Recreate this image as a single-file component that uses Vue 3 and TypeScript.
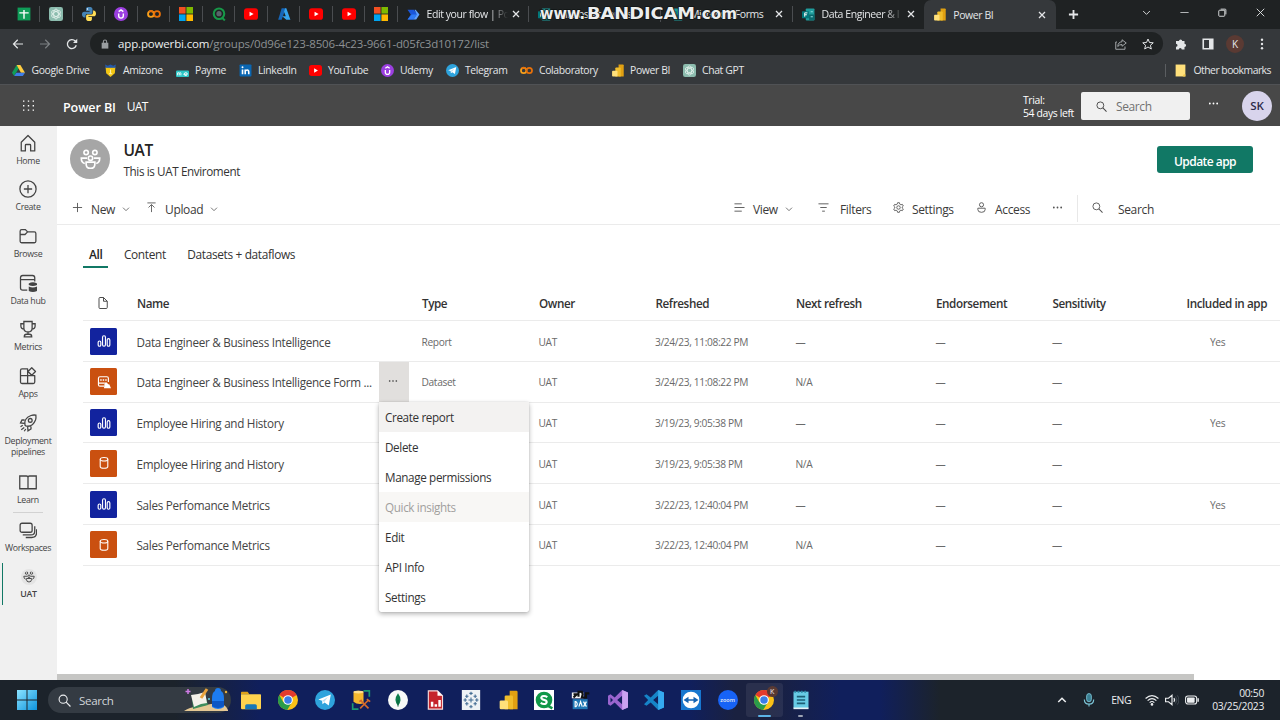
<script setup lang="ts">
import { ref } from 'vue'

interface Tab {
  icon: string
  title: string
  fade?: boolean
  active?: boolean
}

interface Item {
  name: string
  icon: string
  kind: string
  type: string
  refreshed: string
  next: string
  included: string
}

// Inner markup of every glyph, all drawn on a 24x24 box
const icons: Record<string, string> = {
  sheet: '<path fill="#0f9d58" d="M1 1h22v22H1z"/><path stroke="#fff" stroke-width="2.4" fill="none" d="M12 5v15M4 10h16"/>',
  gpt: '<rect width="24" height="24" rx="4" fill="#8cbcae"/><g fill="none" stroke="#e8f4f0" stroke-width="1.4"><ellipse cx="12" cy="12" rx="4" ry="8.5"/><ellipse cx="12" cy="12" rx="4" ry="8.5" transform="rotate(60 12 12)"/><ellipse cx="12" cy="12" rx="4" ry="8.5" transform="rotate(120 12 12)"/></g>',
  python: '<path fill="#4584b6" d="M12 0C7 0 7 2 7 4v3h6v1H4C1 8 0 10 0 13s2 5 4 5h2v-3c0-2 1-3 3-3h6c2 0 3-1 3-3V4c0-3-2-4-6-4z"/><path fill="#ffde57" d="M12 24c5 0 5-2 5-4v-3h-6v-1h9c3 0 4-2 4-5s-2-5-4-5h-1v3c0 2-1 4-3 4h-6c-2 0-3 1-3 3v4c0 3 2 4 5 4z"/><circle cx="9.500" cy="3.500" r="1.200" fill="#fff"/>',
  udemy: '<circle cx="12" cy="12" r="12" fill="#9b3fe0"/><path d="M8 11v4q0 4 4 4t4-4v-4M8 8l4-3 4 3" fill="none" stroke="#fff" stroke-width="2.400"/>',
  colab: '<g fill="none" stroke-width="3.200"><circle cx="6.800" cy="12" r="5" stroke="#f9a11b"/><circle cx="17.200" cy="12" r="5" stroke="#e8710a"/><path d="M3.300 8.500a5 5 0 0 1 7 0" stroke="#e8710a"/></g>',
  ms: '<path fill="#f25022" d="M0 0h11.300v11.300H0z"/><path fill="#7fba00" d="M12.700 0H24v11.300H12.700z"/><path fill="#00a4ef" d="M0 12.700h11.300V24H0z"/><path fill="#ffb900" d="M12.700 12.700H24V24H12.700z"/>',
  qlik: '<circle cx="12" cy="11.500" r="9" fill="none" stroke="#179848" stroke-width="3.600"/><circle cx="12" cy="11.500" r="4.500" fill="#58646a"/><path d="m17 18 5 5" stroke="#179848" stroke-width="3.500"/>',
  youtube: '<rect y="2" width="24" height="20" rx="5" fill="#f00"/><path fill="#fff" d="m9.500 8 7 4-7 4z"/>',
  azure: '<path fill="#1666b8" d="M8 2h7L8 22H2z"/><path fill="#35a4ee" d="M14 2h2l7 20h-7L9 16h6l-3-8z"/>',
  flow: '<path fill="#1a56db" d="M1 3h12l6 9-6 9H1l6-9z"/><path fill="#5ea0ff" d="M14 3h2l7 9-6 9h-5l6-9z"/><path fill="#2f7bf5" d="m1 21 8-9h9l-6 9z"/>',
  forms: '<rect x="7" y="1" width="16" height="22" rx="1.500" fill="#1f9c9c"/><path fill="#0b6a6e" d="M13 12h10v10H13z"/><rect y="6" width="13" height="13" rx="1" fill="#03787c"/><path d="M5 16V9h5M5 12.500h4" fill="none" stroke="#fff" stroke-width="1.800"/><path d="M16 7h4M16 16h4" stroke="#8ee0df" stroke-width="2"/>',
  powerbi: '<path fill="#e0a012" d="M14 1h8q1.500 0 1.500 1.500V23H14z"/><path fill="#f0bd2c" d="M8 8q0-1.500 1.500-1.500h7Q18 6.500 18 8v15H8z"/><path fill="#ffe07a" d="M2 14q0-1.500 1.500-1.500h7Q12 12.500 12 14v9H3.500Q2 23 2 21.500z"/>',
  drive: '<path fill="#109d58" d="M8.500 2 0 16l4 6 8.500-14z"/><path fill="#ffcd40" d="M8.500 2h7L24 16h-7.500z"/><path fill="#3f7de8" d="M8 16h16l-4 6H4z"/>',
  amizone: '<path fill="#f3c613" d="M3 6h18l-1 11-8 7-8-7z"/><path fill="#2458a8" d="m2 1 5 2 5-2 5 2 5-2-1 6H3z"/><path stroke="#fff0a8" stroke-width="2" fill="none" d="M12 10v8M9 18h6"/>',
  payme: '<rect y="12" width="24" height="12" rx="2" fill="#2cc6c6"/><path d="M3 21v-5M3 17q3-2 3 0v4M6 17q3-2 3 0v4M14 19h7q0-3-3-3t-3 3 5 2" stroke="#fff" fill="none" stroke-width="1.700"/>',
  linkedin: '<rect x="1" y="1" width="22" height="22" rx="1.500" fill="#0a66b2"/><path stroke="#fff" stroke-width="3" fill="none" d="M6.500 10v9M11.500 19v-9M11.500 13q1-2 3.500-2 3 0 3 4v4"/><circle cx="6.500" cy="6" r="1.800" fill="#fff"/>',
  telegram: '<circle cx="12" cy="12" r="12" fill="#2ea3dc"/><path fill="#fff" d="m4 11.500 15-6-2.500 13-5-3.500-2.500 2-.5-4z"/><path d="m8.500 13 7-4.500-4.500 6z" fill="#b8dff2"/>',
  folder: '<path fill="#ffe07b" d="M3 1h18v22H3z"/><path fill="#f2c84c" d="M18 19h3v4h-5z"/>',
  back: '<path d="M22 12H3M11.500 3.500 3 12l8.500 8.500" fill="none" stroke="currentColor" stroke-width="2.400"/>',
  forward: '<path d="M2 12h19M12.500 3.500 21 12l-8.500 8.500" fill="none" stroke="currentColor" stroke-width="2.400"/>',
  reload: '<path d="M20.500 14.500A9 9 0 1 1 18.500 6L21 9" fill="none" stroke="currentColor" stroke-width="2.600"/><path fill="currentColor" d="M22.500 1.500V10H14z"/>',
  lock: '<path fill="currentColor" d="M4 9h16v14H4z"/><path d="M8 10V6.500a4 4 0 0 1 8 0V10" fill="none" stroke="currentColor" stroke-width="2.500"/>',
  share: '<path d="M4 8H1.500v14.500H20V17" fill="none" stroke="currentColor" stroke-width="1.900"/><path d="M14 3.500 22.500 10 14 16.500V13q-6 0-8.500 4 .5-9 8.500-9.500z" fill="none" stroke="currentColor" stroke-width="1.900" stroke-linejoin="round"/>',
  star: '<path d="m12 2 3 7 7.500.600-5.700 5 1.800 7.400-6.600-4-6.600 4 1.800-7.400-5.700-5L9 9z" fill="none" stroke="currentColor" stroke-width="2"/>',
  puzzle: '<path fill="currentColor" d="M2 6h6a3.200 3.200 0 1 1 6.400 0H19v5.500a3.200 3.200 0 1 1 0 6.400V23h-5.500a3 3 0 0 0-6 0H2v-5.500a3 3 0 0 0 0-6z"/>',
  panel: '<path d="M2.500 2.500h19v19h-19z" fill="none" stroke="currentColor" stroke-width="3.200"/><path fill="currentColor" d="M14 3h8v18h-8z"/>',
  kebab: '<g fill="currentColor"><circle cx="12" cy="3.500" r="2.400"/><circle cx="12" cy="12" r="2.400"/><circle cx="12" cy="20.500" r="2.400"/></g>',
  dots: '<g fill="currentColor"><circle cx="4" cy="12" r="2"/><circle cx="12" cy="12" r="2"/><circle cx="20" cy="12" r="2"/></g>',
  close: '<path d="m3 3 18 18M21 3 3 21" stroke="currentColor" stroke-width="3.800"/>',
  closeThin: '<path d="m2 2 20 20M22 2 2 22" stroke="currentColor" stroke-width="2.400"/>',
  plusBold: '<path d="M12 2v20M2 12h20" stroke="currentColor" stroke-width="4"/>',
  plus: '<path d="M12 2v20M2 12h20" stroke="currentColor" stroke-width="2"/>',
  chevron: '<path d="m3 8 9 9 9-9" fill="none" stroke="currentColor" stroke-width="2.400"/>',
  chevronUp: '<path d="m3 17 9-9 9 9" fill="none" stroke="currentColor" stroke-width="3.600"/>',
  minus: '<path d="M1 12h22" stroke="currentColor" stroke-width="2"/>',
  restore: '<rect x="2" y="6" width="16" height="16" rx="2" fill="none" stroke="currentColor" stroke-width="2.400"/><path d="M7 3h12q2 0 2 2v12" fill="none" stroke="currentColor" stroke-width="2.400"/>',
  waffle: '<path stroke="currentColor" stroke-width="3" stroke-dasharray="3 7.500" d="M0 2.500h24M0 12.500h24M0 22h24"/>',
  search: '<circle cx="9.500" cy="9.500" r="7.500" fill="none" stroke="currentColor" stroke-width="2"/><path d="m15 15 8 8" stroke="currentColor" stroke-width="2.200"/>',
  home: '<path d="M3 11 12 2l9 9v11.500h-5.500V15q0-1-1-1h-5q-1 0-1 1v7.500H3z" fill="none" stroke="currentColor" stroke-width="1.700" stroke-linejoin="round"/>',
  create: '<circle cx="12" cy="12" r="10.800" fill="none" stroke="currentColor" stroke-width="1.700"/><path d="M12 6.500v11M6.500 12h11" stroke="currentColor" stroke-width="1.700"/>',
  browse: '<path d="M1.500 5.500q0-2 2-2h5l3 3h9q2 0 2 2V19q0 2-2 2h-17q-2 0-2-2zM1.500 10H8l3.500-3.500" fill="none" stroke="currentColor" stroke-width="1.700"/>',
  datahub: '<path d="M11 21.500H5Q2 21.500 2 18.500V5q0-3 3-3h13q3 0 3 3v5M2 7.500h19" fill="none" stroke="currentColor" stroke-width="1.700"/><path fill="currentColor" d="M13 12.500q5.500-3 11 0v2q-5.500 3-11 0zM13 16.500q5.500 3 11 0v6q-5.500 3-11 0z"/>',
  metrics: '<path d="M6.500 2h11v9q0 5-5.500 5t-5.500-5zM6.500 5H2.500v3q0 4 4.500 4M17.500 5h4v3q0 4-4.500 4M12 16v3M7 22.500q0-3.500 3-3.500h4q3 0 3 3.500z" fill="none" stroke="currentColor" stroke-width="1.700"/>',
  apps: '<path d="M2 11.500v-7q0-2 2-2h7.500v9zM2 11.500h9.500v10.500H4q-2 0-2-2zM11.500 11.500H21q0 0 0 2V20q0 2-2 2h-7.500zM17 1l5 5-5 5-5-5z" fill="none" stroke="currentColor" stroke-width="1.700" stroke-linejoin="round"/>',
  rocket: '<path d="M8 15q-2-9 8-13 3-1 6.500-.5.500 3.500-.5 6.500-4 10-13 8zM7.500 8H4l-2 4 5 .500M16 16.500V20l-4 2.500-.5-5.500M2 17l3-2M3 21l4-3M7 23l2-3" fill="none" stroke="currentColor" stroke-width="1.700"/><circle cx="15" cy="8.500" r="2.500" fill="none" stroke="currentColor" stroke-width="1.700"/>',
  learn: '<path d="M1 4h9q2 0 2 2v14q0 1-2 1H1zM23 4h-9q-2 0-2 2v14q0 1 2 1h9z" fill="none" stroke="currentColor" stroke-width="1.700"/>',
  workspaces: '<rect x="1.500" y="3" width="16" height="12" rx="2.500" fill="none" stroke="currentColor" stroke-width="1.700"/><path d="M5 18.500h11q5 0 5-5V7M9 22h8q6.500 0 6.500-7v-4" fill="none" stroke="currentColor" stroke-width="1.700"/>',
  people: '<g fill="none" stroke="currentColor" stroke-width="1.900"><circle cx="7" cy="4" r="2.500"/><circle cx="17" cy="4" r="2.500"/><circle cx="12" cy="10.500" r="2.500"/><path d="M7 15h10v2q0 5-5 5t-5-5zM8 10.500H1.500q0 5 4 6M16 10.500h6.500q0 5-4 6"/></g>',
  upload: '<path d="M3 2h18M12 22V6M5.500 12 12 5.500l6.500 6.500" fill="none" stroke="currentColor" stroke-width="1.900"/>',
  view: '<path d="M1 4h16M1 12h22M1 20h16" stroke="currentColor" stroke-width="2"/>',
  filters: '<path d="M1 4h22M5 12h14M9 20h6" stroke="currentColor" stroke-width="2"/>',
  settings: '<path d="m10 1.500-.8 3.200-2.400 1.400L3.500 5.200l-2 3.600L4 11v2l-2.500 2.200 2 3.600 3.300-.9 2.400 1.400.8 3.200h4l.8-3.200 2.400-1.400 3.300.9 2-3.600L20 13v-2l2.500-2.200-2-3.600-3.300.9-2.400-1.400L14 1.500z" fill="none" stroke="currentColor" stroke-width="1.900"/><circle cx="12" cy="12" r="3.800" fill="none" stroke="currentColor" stroke-width="1.900"/>',
  access: '<g fill="none" stroke="currentColor" stroke-width="2"><circle cx="12" cy="6" r="4.500"/><path d="M4 13.500h16v3q0 6-8 6t-8-6z"/></g>',
  file: '<path d="M4 3q0-2 2-2h7l7.500 7.500V21q0 2-2 2H6q-2 0-2-2zM13 1v7.500h7.500" fill="none" stroke="currentColor" stroke-width="1.900"/>',
  report: '<g fill="none" stroke="currentColor" stroke-width="2"><rect x="2" y="12" width="4.500" height="9" rx="2.200"/><rect x="9.500" y="3" width="5" height="18" rx="2.400"/><rect x="17.500" y="8" width="4.500" height="13" rx="2.200"/></g>',
  dataset: '<g fill="none" stroke="currentColor" stroke-width="1.900"><ellipse cx="12" cy="5.500" rx="6.500" ry="3"/><path d="M5.500 5.500v12.500q0 3 6.500 3t6.500-3v-12.500"/></g>',
  flowset: '<path d="M12 19H5q-2.500 0-2.500-2.500v-11Q2.500 3 5 3h12q2.500 0 2.500 2.500V12M2.500 14H13" fill="none" stroke="currentColor" stroke-width="2"/><path stroke="currentColor" stroke-width="2.500" stroke-dasharray="2.500 1.800" d="M5.500 8.500h12"/><path fill="currentColor" d="M13 13h4l2 3h2l3 6.500H12z"/>',
  windows: '<defs><linearGradient id="win" x2="1" y2="1"><stop stop-color="#8be3ff"/><stop offset="1" stop-color="#0d93dd"/></linearGradient></defs><path fill="url(#win)" d="M0 0h11.400v11.400H0zM12.600 0H24v11.400H12.600zM0 12.600h11.400V24H0zM12.600 12.600H24V24H12.600z"/>',
  explorer: '<path fill="#dda21a" d="M0 3q0-1 1-1h7l2 3H0z"/><path fill="#ffd34e" d="M0 5h23q1 0 1 1v16q0 1-1 1H1q-1 0-1-1z"/><path fill="#1878b8" d="M5 23v-4q0-2 2-2h10q2 0 2 2v4z"/>',
  chrome: '<circle cx="12" cy="12" r="12" fill="#fbc116"/><path fill="#e33b2e" d="M12 12 1.600 6A12 12 0 0 1 22.400 6z"/><path fill="#2a9c4a" d="M12 12v0L6.500 15 1.600 6A12 12 0 0 0 11 24l5.500-9z"/><circle cx="12" cy="12" r="5.800" fill="#fff"/><circle cx="12" cy="12" r="4.500" fill="#3a7de8"/>',
  tools: '<path d="M15 1h7v7M2 16v7h7" fill="none" stroke="#1c9a72" stroke-width="2"/><path fill="#f5b82e" d="M3 2q5-2 12 0v14q-7 2-12-2z"/><ellipse cx="9" cy="2.500" rx="6" ry="1.700" fill="#ffdf8a"/><path d="m11 22 10-10M12 13l9 9M10 14l3-2M19 11l4 3" stroke="#d46a2d" stroke-width="2"/>',
  mongo: '<circle cx="12" cy="12" r="12" fill="#f7faf8"/><path fill="#0b7d4b" d="M12 4q6 8 0 15-6-7 0-15z"/><path d="M12 12v8" stroke="#0a5a38" stroke-width="1"/>',
  reportdoc: '<path fill="#c5242b" stroke="#f5d9da" stroke-width="1.400" d="M4 1h11l6 6v16H4z"/><path fill="#fff" d="M7 14h3v6H7zM11.500 17h3v3h-3zM16 12h3v8h-3zM15 1v6h6z"/>',
  tableau: '<path fill="#eef2f5" d="M1 0h22v24H1z"/><path stroke="#426c93" stroke-width="1.300" d="M12 9v6M9 12h6M12 2v4M10 4h4M12 18v4M10 20h4M3 12h4M5 10v4M17 12h4M19 10v4M7 5.500v4M5 7.500h4M17 5.500v4M15 7.500h4M7 14.500v4M5 16.500h4M17 14.500v4M15 16.500h4"/>',
  qliksense: '<path fill="#fff" d="M0 0h24v24H0z"/><circle cx="12" cy="12" r="10" fill="#109848"/><path d="m17 19 5 3" stroke="#109848" stroke-width="3"/><path d="M16 8.500q-3-2-6-1-2.500 2 0 3.500l4 1.500q2.500 2 0 4-3 1-6-1" fill="none" stroke="#fff" stroke-width="2.600"/>',
  dax: '<path fill="#f4f4f4" d="M1 3h14v7H1z"/><path fill="#2178b5" d="M2 11h18v12H2z"/><path d="M9 8V2h4l1 3-1 4h5V4h4M3 5h4L3 9" stroke="#111" stroke-width="2.500" fill="none"/><path d="M5 14v6h1q3-3 0-6zM9.500 20l2-6 2 6M15 14l3.500 6M18.500 14 15 20" stroke="#fff" stroke-width="1.400" fill="none"/>',
  vs: '<path fill="#9a65cf" d="M17 0 8 9 3 5 0 7v10l3 2 5-4 9 9 7-3V3zM3 9l3 3-3 3zm14-2v10l-6-5z" fill-rule="evenodd"/><path fill="#c9a2f1" d="m17 0 7 3v18l-7 3z"/>',
  vscode: '<path fill="#1684c8" d="M17 0 8 9 3 5 0 7l5 5-5 5 3 2 5-4 9 9 7-3V3zm0 7v10l-6-5z" fill-rule="evenodd"/><path fill="#35aaf0" d="m17 0 7 3v18l-7 3z"/>',
  teamviewer: '<path fill="#1777cf" d="M0 0h24v24H0z"/><circle cx="12" cy="12" r="10" fill="#fff"/><path fill="#1463b2" d="m3 12 6-4v3h6V8l6 4-6 4v-3H9v3z"/>',
  zoomBg: '<circle cx="12" cy="12" r="12" fill="#1763f6"/>',
  notepad: '<path fill="#68cbe5" d="M3 2h18v20H3z"/><path fill="#e7f3f7" d="M3 21h18v2H3z"/><path stroke="#1d5f76" stroke-width="2" d="M7 8h10M7 12h10M7 16h10"/><path stroke="#2b87a2" stroke-width="2.500" stroke-dasharray="2 2" d="M4 2h16"/>',
  mic: '<rect x="8" y="1" width="8" height="14" rx="4" fill="#3a7f93" stroke="currentColor" stroke-width="1.500"/><path d="M4 11q0 8 8 8t8-8M12 19v4" fill="none" stroke="currentColor" stroke-width="2"/>',
  wifi: '<g fill="none" stroke="currentColor" stroke-width="2"><path d="M1 9.500q11-10 22 0M4.500 13q7.500-7 15 0M8 16.500q4-4 8 0"/></g><circle cx="12" cy="19.500" r="2.200" fill="currentColor"/>',
  volume: '<path d="M1 9h5l6-5v16l-6-5H1z" fill="none" stroke="currentColor" stroke-width="2"/><path d="M15 9q3 3 0 6" fill="none" stroke="currentColor" stroke-width="2"/><path d="M18 6q5 6 0 12M21 4q6 8 0 16" fill="none" stroke="#4a525a" stroke-width="1.500"/>',
  battery: '<rect x="1" y="5" width="19" height="14" rx="4" fill="none" stroke="currentColor" stroke-width="1.800"/><rect x="3.500" y="7.500" width="13" height="9" rx="1.500" fill="currentColor"/><path d="M22.500 9v6" stroke="currentColor" stroke-width="2.500"/>',
}

const pinned = ['sheet', 'gpt', 'python', 'udemy', 'colab', 'ms', 'qlik', 'youtube', 'azure', 'youtube', 'youtube', 'ms']

const tabs: Tab[] = [
  { icon: 'flow', title: 'Edit your flow | Po', fade: true },
  { icon: 'forms', title: 'Microsoft Forms' },
  { icon: 'forms', title: 'Microsoft Forms' },
  { icon: 'forms', title: 'Data Engineer & I', fade: true },
  { icon: 'powerbi', title: 'Power BI', active: true },
]

const bookmarks = [
  { icon: 'drive', name: 'Google Drive' },
  { icon: 'amizone', name: 'Amizone' },
  { icon: 'payme', name: 'Payme' },
  { icon: 'linkedin', name: 'LinkedIn' },
  { icon: 'youtube', name: 'YouTube' },
  { icon: 'udemy', name: 'Udemy' },
  { icon: 'telegram', name: 'Telegram' },
  { icon: 'colab', name: 'Colaboratory' },
  { icon: 'powerbi', name: 'Power BI' },
  { icon: 'gpt', name: 'Chat GPT' },
]

const nav = [
  { icon: 'home', name: 'Home' },
  { icon: 'create', name: 'Create' },
  { icon: 'browse', name: 'Browse' },
  { icon: 'datahub', name: 'Data hub' },
  { icon: 'metrics', name: 'Metrics' },
  { icon: 'apps', name: 'Apps' },
  { icon: 'rocket', name: 'Deployment pipelines', cls: 'tall' },
  { icon: 'learn', name: 'Learn', cls: 'last' },
  { icon: 'workspaces', name: 'Workspaces' },
]

const columns = ['Name', 'Type', 'Owner', 'Refreshed', 'Next refresh', 'Endorsement', 'Sensitivity', 'Included in app']

const items: Item[] = [
  { name: 'Data Engineer & Business Intelligence', icon: 'report', kind: 'blue', type: 'Report', refreshed: '3/24/23, 11:08:22 PM', next: '—', included: 'Yes' },
  { name: 'Data Engineer & Business Intelligence Form ...', icon: 'flowset', kind: 'orange', type: 'Dataset', refreshed: '3/24/23, 11:08:22 PM', next: 'N/A', included: '' },
  { name: 'Employee Hiring and History', icon: 'report', kind: 'blue', type: '', refreshed: '3/19/23, 9:05:38 PM', next: '—', included: 'Yes' },
  { name: 'Employee Hiring and History', icon: 'dataset', kind: 'orange', type: '', refreshed: '3/19/23, 9:05:38 PM', next: 'N/A', included: '' },
  { name: 'Sales Perfomance Metrics', icon: 'report', kind: 'blue', type: '', refreshed: '3/22/23, 12:40:04 PM', next: '—', included: 'Yes' },
  { name: 'Sales Perfomance Metrics', icon: 'dataset', kind: 'orange', type: '', refreshed: '3/22/23, 12:40:04 PM', next: 'N/A', included: '' },
]

const menu = ['Create report', 'Delete', 'Manage permissions', 'Quick insights', 'Edit', 'API Info', 'Settings']
const openRow = ref(1)
const hovered = ref('Create report')

const taskbar = ['explorer', 'chrome', 'telegram', 'tools', 'mongo', 'reportdoc', 'tableau', 'powerbi', 'qliksense', 'dax', 'vs', 'vscode', 'teamviewer', 'zoomBg', 'chrome', 'notepad']
</script>

<template>
  <div class="screen">
    <div class="tabstrip">
      <div v-for="(p, i) in pinned" :key="i" class="pin">
        <svg viewBox="0 0 24 24" v-html="icons[p]"></svg>
      </div>
      <div v-for="(t, i) in tabs" :key="'t' + i" class="tab" :class="{ active: t.active, before: i === 3 }">
        <svg class="fav" viewBox="0 0 24 24" v-html="icons[t.icon]"></svg>
        <span class="tab-title" :class="{ fade: t.fade }">{{ t.title }}</span>
        <svg v-if="i !== 1" class="x" viewBox="0 0 24 24" v-html="icons.close"></svg>
      </div>
      <svg class="newtab" viewBox="0 0 24 24" v-html="icons.plusBold"></svg>
      <div class="win">
        <svg viewBox="0 0 24 24" v-html="icons.chevron"></svg>
        <svg viewBox="0 0 24 24" v-html="icons.minus"></svg>
        <svg viewBox="0 0 24 24" v-html="icons.restore"></svg>
        <svg viewBox="0 0 24 24" v-html="icons.closeThin"></svg>
      </div>
      <svg class="watermark" viewBox="0 0 200 22">
        <text x="1" y="16.5" font-size="16" textLength="45" lengthAdjust="spacingAndGlyphs">www.</text>
        <text x="48" y="16.5" font-size="16" textLength="108" lengthAdjust="spacingAndGlyphs">BANDICAM</text>
        <text x="157" y="16.5" font-size="15" textLength="41" lengthAdjust="spacingAndGlyphs">.com</text>
      </svg>
    </div>

    <div class="address">
      <svg class="nav-ico" viewBox="0 0 24 24" v-html="icons.back"></svg>
      <svg class="nav-ico dim" viewBox="0 0 24 24" v-html="icons.forward"></svg>
      <svg class="nav-ico" viewBox="0 0 24 24" v-html="icons.reload"></svg>
      <div class="omnibox">
        <svg class="lock" viewBox="0 0 24 24" v-html="icons.lock"></svg>
        <span class="url">app.powerbi.com<i>/groups/0d96e123-8506-4c23-9661-d05fc3d10172/list</i></span>
        <svg class="share" viewBox="0 0 24 24" v-html="icons.share"></svg>
        <svg class="star" viewBox="0 0 24 24" v-html="icons.star"></svg>
      </div>
      <div class="ext">
        <svg viewBox="0 0 24 24" v-html="icons.puzzle"></svg>
        <svg viewBox="0 0 24 24" v-html="icons.panel"></svg>
        <span class="profile">K</span>
        <svg viewBox="0 0 24 24" v-html="icons.kebab"></svg>
      </div>
    </div>

    <div class="bookmarks">
      <div v-for="b in bookmarks" :key="b.name" class="bookmark">
        <svg viewBox="0 0 24 24" v-html="icons[b.icon]"></svg>
        <span>{{ b.name }}</span>
      </div>
      <div class="bookmark other">
        <svg viewBox="0 0 24 24" v-html="icons.folder"></svg>
        <span>Other bookmarks</span>
      </div>
    </div>

    <header class="header">
      <svg class="waffle" viewBox="0 0 24 24" v-html="icons.waffle"></svg>
      <b>Power BI</b>
      <span class="crumb">UAT</span>
      <div class="trial">Trial:<br>54 days left</div>
      <div class="header-search">
        <svg viewBox="0 0 24 24" v-html="icons.search"></svg>
        <span>Search</span>
      </div>
      <svg class="more" viewBox="0 0 24 24" v-html="icons.dots"></svg>
      <div class="avatar">SK</div>
    </header>

    <div class="body">
      <nav class="sidebar">
        <div v-for="n in nav" :key="n.name" class="nav-item" :class="n.cls">
          <svg viewBox="0 0 24 24" v-html="icons[n.icon]"></svg>
          <span>{{ n.name }}</span>
        </div>
        <div class="nav-item current">
          <svg viewBox="0 0 24 24" v-html="icons.people"></svg>
          <span>UAT</span>
        </div>
      </nav>

      <main class="main">
        <div class="title-row">
          <div class="ws-logo">
            <svg viewBox="0 0 24 24" v-html="icons.people"></svg>
          </div>
          <div class="ws-text">
            <h1>UAT</h1>
            <p>This is UAT Enviroment</p>
          </div>
          <button class="update">Update app</button>
        </div>

        <div class="toolbar">
          <div class="tool new">
            <svg viewBox="0 0 24 24" v-html="icons.plus"></svg>
            <span>New</span>
            <svg class="chev" viewBox="0 0 24 24" v-html="icons.chevron"></svg>
          </div>
          <div class="tool upload">
            <svg viewBox="0 0 24 24" v-html="icons.upload"></svg>
            <span>Upload</span>
            <svg class="chev" viewBox="0 0 24 24" v-html="icons.chevron"></svg>
          </div>
          <div class="tool view">
            <svg viewBox="0 0 24 24" v-html="icons.view"></svg>
            <span>View</span>
            <svg class="chev" viewBox="0 0 24 24" v-html="icons.chevron"></svg>
          </div>
          <div class="tool filters">
            <svg viewBox="0 0 24 24" v-html="icons.filters"></svg>
            <span>Filters</span>
          </div>
          <div class="tool settings">
            <svg viewBox="0 0 24 24" v-html="icons.settings"></svg>
            <span>Settings</span>
          </div>
          <div class="tool access">
            <svg viewBox="0 0 24 24" v-html="icons.access"></svg>
            <span>Access</span>
          </div>
          <div class="tool dots">
            <svg viewBox="0 0 24 24" v-html="icons.dots"></svg>
          </div>
          <div class="tool find">
            <svg viewBox="0 0 24 24" v-html="icons.search"></svg>
            <span>Search</span>
          </div>
        </div>

        <div class="pivot">
          <span class="selected">All</span>
          <span>Content</span>
          <span>Datasets + dataflows</span>
        </div>

        <div class="table">
          <div class="row head">
            <svg class="file" viewBox="0 0 24 24" v-html="icons.file"></svg>
            <span v-for="c in columns" :key="c">{{ c }}</span>
          </div>
          <div v-for="(it, i) in items" :key="i" class="row">
            <div class="kind" :class="it.kind">
              <svg viewBox="0 0 24 24" v-html="icons[it.icon]"></svg>
            </div>
            <div class="name">
              <span>{{ it.name }}</span>
              <div v-if="openRow === i" class="row-more">
                <svg viewBox="0 0 24 24" v-html="icons.dots"></svg>
                <div class="menu">
                  <div
                    v-for="m in menu"
                    :key="m"
                    class="menu-item"
                    :class="{ hover: hovered === m, disabled: m === 'Quick insights' }"
                  >{{ m }}</div>
                </div>
              </div>
            </div>
            <span>{{ it.type }}</span>
            <span>UAT</span>
            <span>{{ it.refreshed }}</span>
            <span>{{ it.next }}</span>
            <span>—</span>
            <span>—</span>
            <span class="included">{{ it.included }}</span>
          </div>
        </div>

        <div class="scrollbar"><div class="thumb"></div></div>
      </main>
    </div>

    <footer class="taskbar">
      <svg class="start" viewBox="0 0 24 24" v-html="icons.windows"></svg>
      <div class="task-search">
        <svg viewBox="0 0 24 24" v-html="icons.search"></svg>
        <span>Search</span>
        <svg class="art" viewBox="0 0 46 24">
          <path fill="#e5c894" d="M0 23q6-4 12-4l15-3q14-2 17 6v1z" />
          <path fill="#3e8d5c" d="m8 9 13-3 3 11-15 4z" />
          <path fill="#f4f1ea" d="m7 7 7-1 7-2 2 11-6 1-7 3z" />
          <path stroke="#e8a33c" stroke-width="3" d="m17 10 6-9" />
          <path fill="#1d7cf0" d="M28 11q0-7 3-8 0-3 3-3t3 3q3 1 3 8v8q-6 4-12 0z" />
          <path fill="#0c56c4" d="M28 13h12v5q-6 4-12 0z" />
          <path stroke="#d07be6" stroke-width="1.500" d="M4 1v5M1.500 3.500h5" />
          <circle cx="42" cy="4" r="1.200" fill="#e8b23c" />
          <circle cx="25" cy="11" r="1" fill="#5fd6e8" />
        </svg>
      </div>
      <div class="apps">
        <div v-for="(a, i) in taskbar" :key="i" class="app" :class="{ focused: i === 14, open: i === 15 }">
          <svg viewBox="0 0 24 24" v-html="icons[a]"></svg>
          <em v-if="a === 'zoomBg'" class="zoom">zoom</em>
          <em v-if="i === 14" class="badge">K</em>
        </div>
      </div>
      <div class="tray">
        <svg class="up" viewBox="0 0 24 24" v-html="icons.chevronUp"></svg>
        <svg class="mic" viewBox="0 0 24 24" v-html="icons.mic"></svg>
        <span class="lang">ENG</span>
        <svg class="wifi" viewBox="0 0 24 24" v-html="icons.wifi"></svg>
        <svg class="vol" viewBox="0 0 24 24" v-html="icons.volume"></svg>
        <svg class="bat" viewBox="0 0 24 24" v-html="icons.battery"></svg>
        <div class="clock">00:50<br>03/25/2023</div>
      </div>
    </footer>
  </div>
</template>

<style>
body {
  margin: 0;
  overflow: hidden;
}
</style>

<style scoped>
.screen {
  width: 1280px;
  height: 720px;
  display: flex;
  flex-direction: column;
  overflow: hidden;
  font-family: 'Open Sans', 'Noto Sans', sans-serif;
  font-size: 12px;
  color: #333;
  background: #fff;
}

svg {
  display: block;
  flex: none;
}

span {
  white-space: nowrap;
}

/* browser chrome */
.tabstrip {
  position: relative;
  height: 29px;
  display: flex;
  padding-left: 7.5px;
  background: #1f2223;
  color: #e4e6e8;
  font-size: 10.5px;
}

.pin {
  width: 32.5px;
  height: 28px;
  box-sizing: border-box;
  display: flex;
  align-items: center;
  padding-left: 9px;
  background: linear-gradient(#4a4d50, #4a4d50) right center / 1px 16px no-repeat;
}

.pin svg {
  width: 14px;
  height: 14px;
}

.tab {
  width: 131.7px;
  height: 28px;
  box-sizing: border-box;
  display: flex;
  align-items: center;
  padding-left: 9px;
  background: linear-gradient(#4a4d50, #4a4d50) right center / 1px 16px no-repeat;
}

.tab.before {
  background: none;
}

.tab.active {
  height: 29px;
  background: #35383b;
  border-radius: 7px 7px 0 0;
}

.fav {
  width: 13px;
  height: 13px;
}

.tab-title {
  width: 81px;
  margin-left: 7px;
  letter-spacing: -0.42px;
}

.fade {
  -webkit-mask-image: linear-gradient(90deg, #000 78%, transparent);
  mask-image: linear-gradient(90deg, #000 78%, transparent);
}

.x {
  width: 8px;
  height: 8px;
  margin-left: 4px;
}

.newtab {
  width: 11px;
  height: 11px;
  margin: 9px 0 0 12px;
}

.win {
  margin-left: auto;
  display: flex;
  align-items: center;
  gap: 29px;
  height: 25px;
  padding-right: 15px;
}

.win svg {
  width: 9px;
  height: 9px;
}

.watermark {
  position: absolute;
  left: 539px;
  top: 2px;
  width: 200px;
  height: 22px;
}

.watermark text {
  font-family: 'DejaVu Sans', sans-serif;
  font-weight: bold;
  fill: #eceeee;
  stroke: #101414;
  stroke-width: 1.6px;
  paint-order: stroke;
}

.address {
  height: 29px;
  display: flex;
  align-items: center;
  background: #35383b;
  color: #e4e6e8;
  padding-left: 12px;
}

.nav-ico {
  width: 12px;
  height: 12px;
  margin-right: 15px;
}

.dim {
  color: #7c8083;
}

.omnibox {
  flex: none;
  width: 1073px;
  height: 23px;
  box-sizing: border-box;
  margin-left: -3px;
  border-radius: 12px;
  background: #1f2223;
  display: flex;
  align-items: center;
}

.lock {
  width: 10px;
  height: 10px;
  margin-left: 10px;
  color: #9a9ea1;
}

.url {
  margin-left: 8px;
  flex: 1;
  font-size: 11.5px;
  color: #eceeef;
  letter-spacing: -0.15px;
}

.url i {
  font-style: normal;
  color: #8d9193;
}

.share {
  width: 12px;
  height: 12px;
  color: #a8acae;
}

.star {
  width: 12px;
  height: 12px;
  margin: 0 9px 0 15px;
}

.ext {
  display: flex;
  align-items: center;
  margin-left: 12px;
}

.ext svg {
  width: 12px;
  height: 12px;
  margin-right: 15px;
}

.profile {
  width: 18px;
  height: 18px;
  line-height: 18px;
  margin: 0 12px 0 -3px;
  border-radius: 50%;
  background: #5a3a33;
  text-align: center;
  font-size: 10px;
}

.ext svg:last-child {
  margin-right: 0;
}

.bookmarks {
  height: 27px;
  box-sizing: border-box;
  padding: 0 9px 2px 12px;
  border-bottom: 1px solid #505255;
  display: grid;
  grid-template-columns: 91.5px 72px 63px 70px 72px 65px 74px 91px 72px 60px 1fr;
  align-items: center;
  background: #35383b;
  color: #e4e6e8;
  font-size: 10.4px;
  letter-spacing: -0.36px;
}

.bookmark {
  display: flex;
  align-items: center;
}

.bookmark svg {
  width: 13px;
  height: 13px;
  margin-right: 6.5px;
}

.other {
  justify-self: end;
  height: 13px;
  border-left: 1px solid #5b5e61;
  padding-left: 8px;
  letter-spacing: -0.52px;
}

.header {
  height: 41px;
  display: flex;
  align-items: center;
  background: #484848;
  color: #fff;
}

.waffle {
  width: 11px;
  height: 11px;
  margin: 0 29px 0 23px;
}

.header b {
  font-size: 12.6px;
  font-weight: 600;
  letter-spacing: -0.12px;
  margin-top: 3px;
}

.crumb {
  margin: 1px 0 0 11px;
  font-size: 12px;
  letter-spacing: -0.7px;
}

.trial {
  margin-left: auto;
  font-size: 10.4px;
  line-height: 13px;
  letter-spacing: -0.36px;
  margin-right: 7px;
  margin-top: 2px;
  width: 51px;
  white-space: nowrap;
}

.header-search {
  width: 109px;
  height: 28px;
  box-sizing: border-box;
  padding: 2px 0 0 15px;
  display: flex;
  align-items: center;
  background: #f0f0f0;
  color: #707070;
  border-radius: 2px;
  letter-spacing: -0.4px;
}

.header-search svg {
  width: 11px;
  height: 11px;
  margin-right: 9px;
  color: #444;
}

.more {
  width: 11px;
  height: 11px;
  margin: -4px 23px 0 18px;
}

.avatar {
  width: 30px;
  height: 30px;
  line-height: 30px;
  margin-right: 8px;
  border-radius: 50%;
  background: #d8d4ec;
  color: #2d2a4a;
  font-size: 11.5px;
  font-weight: 600;
  text-align: center;
}

.body {
  flex: 1;
  display: flex;
  min-height: 0;
}

.sidebar {
  width: 57px;
  box-sizing: border-box;
  padding-right: 1px;
  background: #f0f0f0;
}

.nav-item {
  height: 46.7px;
  box-sizing: border-box;
  padding-top: 7.5px;
  display: flex;
  flex-direction: column;
  align-items: center;
  color: #444;
  font-size: 8.8px;
  letter-spacing: -0.32px;
  line-height: 11px;
  text-align: center;
}

.nav-item svg {
  width: 18px;
  height: 18px;
  margin-bottom: 3.5px;
}

.nav-item.tall {
  height: 59px;
}

.nav-item span {
  padding-top: 0.5px;
}

.nav-item.tall span {
  white-space: normal;
}

.nav-item.last {
  height: 48px;
  background: linear-gradient(#d2d2d2, #d2d2d2) center bottom / 30px 1px no-repeat;
}

.nav-item.current {
  margin: 3.5px 0 0 2px;
  padding: 6px 2px 0 0;
  height: 42px;
  border-left: 1.5px solid #117865;
  font-weight: 600;
}

.nav-item.current svg {
  width: 12px;
  height: 12px;
  padding: 2px;
  border-radius: 50%;
  background: #e4e4e4;
  margin: 0 0 3px;
}

.main {
  flex: 1;
  min-width: 0;
  display: flex;
  flex-direction: column;
}

.title-row {
  height: 67px;
  display: flex;
  padding-left: 13px;
}

.ws-logo {
  width: 40px;
  height: 40px;
  margin-top: 13px;
  border-radius: 50%;
  background: #a6a6a6;
  color: #fff;
  display: flex;
  align-items: center;
  justify-content: center;
}

.ws-logo svg {
  width: 21px;
  height: 21px;
}

.ws-text {
  margin-left: 13.5px;
}

h1 {
  margin: 13px 0 0;
  font-size: 15.5px;
  line-height: 22px;
  font-weight: 600;
  letter-spacing: -0.4px;
  color: #252423;
}

p {
  margin: 2px 0 0;
  font-size: 11.7px;
  line-height: 17px;
  letter-spacing: -0.39px;
}

.update {
  margin: 20px 27px 0 auto;
  width: 96px;
  height: 27px;
  padding: 3px 0 0;
  border: 0;
  border-radius: 3px;
  background: #117865;
  color: #fff;
  font-family: inherit;
  font-size: 12px;
  font-weight: 600;
  letter-spacing: -0.55px;
}

.toolbar {
  height: 32px;
  box-sizing: border-box;
  border-bottom: 1px solid #ebebeb;
  display: flex;
  padding-left: 15px;
  color: #3b3a39;
}

.tool {
  display: flex;
  align-items: center;
  height: 31px;
  box-sizing: border-box;
  letter-spacing: -0.35px;
}

.tool svg {
  width: 11px;
  height: 11px;
  margin-top: -2px;
  color: #555;
}

.tool .chev {
  width: 8px;
  height: 8px;
  margin: 1px 0 0 7px;
}

.tool span {
  margin-left: 8px;
  padding-top: 1px;
}

.new {
  width: 74px;
}

.upload {
  width: 588px;
}

.view {
  width: 84px;
}

.filters {
  width: 75px;
}

.filters span {
  margin-left: 11px;
}

.settings {
  width: 83px;
}

.access {
  width: 76px;
}

.dots {
  width: 25px;
}

.find {
  margin: 2px 0;
  height: 27px;
  border-left: 1px solid #e8e8e8;
  padding-left: 14px;
}

.find span {
  margin-left: 15px;
}

.pivot {
  display: flex;
  gap: 16px;
  padding: 20px 0 0 26px;
  font-size: 11.9px;
  letter-spacing: -0.36px;
}

.pivot span {
  height: 22px;
  line-height: 18.5px;
  margin-right: 5.5px;
}

.pivot .selected {
  padding: 0 6px;
  margin-right: -0.5px;
  font-weight: 600;
  color: #252423;
  border-bottom: 2px solid #117865;
  height: 20px;
  padding-bottom: 1px;
}

.table {
  margin: 17px 0 0 26px;
}

.row {
  height: 40.75px;
  box-sizing: border-box;
  border-bottom: 1px solid #ebebeb;
  display: grid;
  grid-template-columns: 53.5px 285px 117px 116.5px 140.5px 140px 116.5px 134px 1fr;
  align-items: center;
  font-size: 10.2px;
  letter-spacing: -0.35px;
  color: #6a6a6a;
}

.row > span {
  padding-top: 1px;
}

.row.head {
  height: 36px;
  font-size: 11.7px;
  font-weight: 600;
  letter-spacing: -0.42px;
  color: #333;
}

.head > span {
  padding: 0 0 0 0.5px;
}

.file {
  width: 12px;
  height: 12px;
  margin-left: 14px;
  color: #444;
}

.kind {
  width: 27px;
  height: 27px;
  margin-left: 7px;
  border-radius: 1.5px;
  display: flex;
  align-items: center;
  justify-content: center;
  color: #fff;
}

.kind svg {
  width: 14px;
  height: 14px;
}

.blue {
  background: #12239e;
}

.orange {
  background: #ca5010;
}

.name {
  height: 40px;
  display: flex;
  align-items: center;
  font-size: 11.7px;
  letter-spacing: -0.29px;
  color: #444;
}

.name > span {
  padding-top: 1px;
}

.included {
  padding-left: 24px;
}

.row-more {
  position: relative;
  flex: none;
  margin-left: auto;
  margin-right: 13px;
  width: 29.5px;
  height: 40px;
  display: flex;
  justify-content: center;
  background: #e1dfdd;
  color: #333;
}

.row-more svg {
  width: 10px;
  height: 10px;
  margin: 14px 2px 0 0;
}

.menu {
  position: absolute;
  z-index: 2;
  left: 0;
  top: 40px;
  width: 150px;
  background: #fff;
  border-radius: 2px;
  box-shadow: 0 2px 5px rgba(0, 0, 0, 0.3), 0 0 1px rgba(0, 0, 0, 0.3);
  font-size: 11.7px;
}

.menu-item {
  height: 30px;
  line-height: 30px;
  padding-left: 6px;
  letter-spacing: -0.36px;
}

.menu-item.hover {
  background: #f3f2f1;
}

.menu-item.disabled {
  background: #f8f7f5;
  color: #a19f9d;
}

.scrollbar {
  margin-top: auto;
  height: 6px;
}

.thumb {
  width: 1137px;
  height: 6px;
  background: #c6c6c4;
}

/* windows taskbar */
.taskbar {
  height: 40px;
  display: flex;
  align-items: center;
  color: #eceef0;
  background: linear-gradient(90deg, #1c232b 0, #1c232b 175px, #101f5c 260px, #101f5c 690px, #1a2140 735px, #1a2140 770px, #101f5c 840px, #101f5c 880px, #1c232b 940px);
}

.start {
  width: 20px;
  height: 20px;
  margin-left: 17px;
}

.task-search {
  width: 183px;
  height: 26px;
  margin-left: 11px;
  border-radius: 13px;
  background: #343b43;
  display: flex;
  align-items: center;
}

.task-search svg {
  width: 13px;
  height: 13px;
  margin: 0 8px 0 10px;
}

.task-search span {
  font-size: 11.6px;
  letter-spacing: -0.35px;
  color: #d0d4d8;
}

.task-search .art {
  width: 46px;
  height: 24px;
  margin: 0 1px 0 auto;
}

.apps {
  display: flex;
  margin-left: 2px;
}

.app {
  position: relative;
  width: 36.65px;
  height: 34px;
  display: flex;
  align-items: center;
  justify-content: center;
}

.app svg {
  width: 20px;
  height: 20px;
}

.focused {
  border-radius: 3px;
  background: rgba(255, 255, 255, 0.07);
}

.focused::after,
.open::after {
  content: '';
  position: absolute;
  bottom: 0;
  width: 13px;
  height: 2.5px;
  border-radius: 2px;
  background: #5cb4e8;
}

.open::after {
  width: 5px;
  background: #9da3b4;
}

.zoom {
  position: absolute;
  font-style: normal;
  font-size: 5.5px;
  font-weight: 600;
}

.badge {
  position: absolute;
  top: 3px;
  right: 5px;
  width: 11px;
  height: 11px;
  line-height: 11px;
  border-radius: 50%;
  background: #5a3a33;
  font-style: normal;
  font-size: 7px;
  text-align: center;
}

.tray {
  margin-left: auto;
  display: flex;
  align-items: center;
  padding-right: 16px;
}

.up {
  width: 10px;
  height: 10px;
}

.mic {
  width: 14px;
  height: 14px;
  margin-left: 15px;
  color: #7cc4d6;
}

.lang {
  margin: 0 14px 0 15px;
  font-size: 10.4px;
  letter-spacing: -0.45px;
}

.wifi,
.vol,
.bat {
  width: 14px;
  height: 14px;
}

.vol,
.bat {
  margin-left: 6px;
}

.clock {
  width: 65px;
  text-align: right;
  font-size: 10.3px;
  line-height: 13px;
  letter-spacing: -0.28px;
}
</style>
